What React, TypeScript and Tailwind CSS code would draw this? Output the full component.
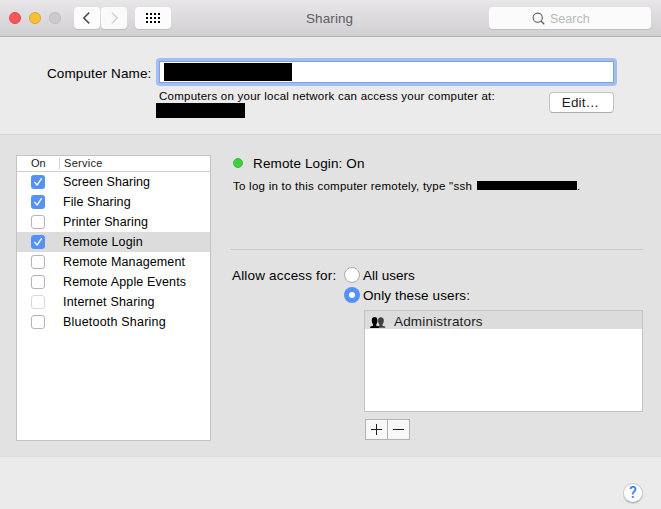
import React from "react";

type Service = { name: string; on?: boolean; selected?: boolean; disabled?: boolean; track: string };

const services: Service[] = [
  { name: "Screen Sharing", on: true, track: "tracking-[0.06px]" },
  { name: "File Sharing", on: true, track: "tracking-[0.08px]" },
  { name: "Printer Sharing", track: "tracking-[0.11px]" },
  { name: "Remote Login", on: true, selected: true, track: "tracking-[0.17px]" },
  { name: "Remote Management", track: "tracking-[0.11px]" },
  { name: "Remote Apple Events", track: "tracking-[0.16px]" },
  { name: "Internet Sharing", disabled: true, track: "tracking-[0.17px]" },
  { name: "Bluetooth Sharing", track: "tracking-[0.2px]" },
];

function Checkbox({ on, disabled }: { on?: boolean; disabled?: boolean }) {
  if (on) {
    return (
      <span className="block size-[14px] shrink-0 rounded-[3px] bg-[#5491fb]">
        <svg viewBox="0 0 14 14" className="block size-[14px]">
          <path d="M3.7 7.4 6.1 10.1 10.4 3.7" fill="none" stroke="#fff" strokeWidth="1.4" strokeLinecap="round" strokeLinejoin="round" />
        </svg>
      </span>
    );
  }
  return (
    <span
      className={
        "block size-[14px] shrink-0 rounded-[3px] border bg-white " +
        (disabled ? "border-[#d9d9d9]" : "border-[#b4b4b4]")
      }
    />
  );
}

function TitleBar() {
  return (
    <header className="flex h-[37px] border-b border-[#b3b0b3] bg-linear-to-b from-[#e8e6e8] to-[#d1cfd1] pt-[7px] pl-[9px]">
      <div className="flex gap-2 pt-[5px]">
        <span className="size-3 rounded-full border border-[#e2474f] bg-[#f9565d]" />
        <span className="size-3 rounded-full border border-[#dda32e] bg-[#f8bf35]" />
        <span className="size-3 rounded-full border border-[#bdbbbd] bg-[#cccacc]" />
      </div>
      <div className="ml-[13px] flex gap-px">
        <span className="h-[22px] w-[26px] rounded-[4px] bg-[#fcfcfc] shadow-[0_1px_0_#bfbdbf]">
          <svg viewBox="0 0 26 22" className="block h-[22px] w-[26px]">
            <path d="M15.2 5.6 9.8 11l5.4 5.4" fill="none" stroke="#4b4b4b" strokeWidth="1.5" />
          </svg>
        </span>
        <span className="h-[22px] w-[26px] rounded-[4px] bg-[#fafafa] shadow-[0_1px_0_#bfbdbf]">
          <svg viewBox="0 0 26 22" className="block h-[22px] w-[26px]">
            <path d="M10.8 5.6 16.2 11l-5.4 5.4" fill="none" stroke="#cfcfcf" strokeWidth="1.3" />
          </svg>
        </span>
      </div>
      <div className="ml-2 grid h-[22px] w-9 grid-cols-[repeat(4,2px)] content-center justify-center gap-[2px] rounded-[4px] bg-[#fcfcfc] shadow-[0_1px_0_#bfbdbf]">
        {Array.from({ length: 12 }, (_, i) => (
          <span key={i} className="size-[2px] bg-black" />
        ))}
      </div>
      <h1 className="ml-[135px] w-[60px] pt-[4px] text-[13.5px] leading-[16px] tracking-[0.1px] text-[#5f5d5f]">Sharing</h1>
      <div className="ml-[123px] flex h-[22px] w-[162px] rounded-[4px] bg-[#fbfbfb] pl-[43px] shadow-[0_1px_0_#bfbdbf]">
        <svg viewBox="0 0 14 14" className="mt-[5px] size-[14px]">
          <circle cx="5.7" cy="5.7" r="4.6" fill="none" stroke="#5c5c5c" strokeWidth="1.1" />
          <path d="m9 9 3.2 3.2" stroke="#5c5c5c" strokeWidth="1.3" />
        </svg>
        <span className="pt-[4px] pl-1 text-[12.5px] leading-[16px] text-[#b9b9b9]">Search</span>
      </div>
    </header>
  );
}

function NameSection() {
  return (
    <section className="flex h-[98px] border-b border-[#d5d5d5] bg-[#ebebeb] pt-[21px]">
      <label className="w-[156px] pt-[8px] pl-[47px] text-[13.5px] leading-[16px] tracking-[0.12px] whitespace-nowrap">Computer Name:</label>
      <div className="w-[461px]">
        <div className="h-7 rounded-[4px] bg-[#a2bff3] p-[3px]">
          <div className="h-[22px] border border-[#7f9fe0] bg-white pt-px pl-1">
            <div className="h-[18px] w-32 bg-black" />
          </div>
        </div>
        <div className="flex justify-between">
          <div>
            <p className="mt-[4px] ml-[3px] text-[11.5px] leading-[13px] tracking-[0.24px] whitespace-nowrap">
              Computers on your local network can access your computer at:
            </p>
            <div className="h-[15px] w-[89px] bg-black" />
          </div>
          <button className="mt-[6px] mr-[3px] h-[21px] w-[65px] rounded-[4px] border border-[#c3c3c3] border-b-[#acacac] bg-white pr-[2px] text-[13.5px] leading-[19px] tracking-[0.15px] text-[#1c1c1c]">
            Edit…
          </button>
        </div>
      </div>
    </section>
  );
}

function ServiceList() {
  return (
    <div className="h-[286px] w-[195px] border border-[#c3c3c3] bg-white">
      <div className="flex h-4 border-b border-[#d0d0d0] text-[11px] leading-[15px] text-[#1c1c1c]">
        <span className="w-[42px] pl-[14px]">On</span>
        <span className="mt-[2px] h-[11px] w-px bg-[#d2d2d2]" />
        <span className="pl-1 tracking-[0.3px]">Service</span>
      </div>
      {services.map((s) => (
        <div key={s.name} className={"flex h-5 items-center pl-[14px] " + (s.selected ? "bg-[#dcdcdc]" : "")}>
          <Checkbox on={s.on} disabled={s.disabled} />
          <span className={"pl-[18px] text-[12.5px] leading-[20px] whitespace-nowrap " + s.track}>{s.name}</span>
        </div>
      ))}
    </div>
  );
}

function Details() {
  return (
    <div className="ml-[19px] w-[413px]">
      <div className="flex h-4 items-center">
        <span className="ml-[3px] size-[10px] rounded-full border border-[#38bd35] bg-[#41d03d]" />
        <span className="pt-[2px] pl-[10px] text-[13.5px] leading-[16px] tracking-[0.13px]">Remote Login: On</span>
      </div>
      <div className="mt-[9px] flex h-[13px] pl-[3px] text-[11.5px] leading-[13px] tracking-[0.25px]">
        <span className="w-[244px] whitespace-nowrap">To log in to this computer remotely, type "ssh</span>
        <span className="mt-px h-[9px] w-[100px] bg-black" />
        <span>.</span>
      </div>
      <div className="mt-[56px] h-px bg-[#cbcbcb]" />
      <div className="mt-[17px] flex text-[13.5px] leading-[16px]">
        <span className="w-[114px] pt-px pl-[2px] tracking-[0.18px] whitespace-nowrap">Allow access for:</span>
        <div className="flex flex-col gap-1">
          <div className="flex h-4">
            <span className="size-4 rounded-full border border-[#acacac] bg-white" />
            <span className="pt-px pl-[3px]">All users</span>
          </div>
          <div className="flex h-4">
            <span className="flex size-4 items-center justify-center rounded-full bg-[#5491fb]">
              <span className="size-[6px] rounded-full bg-white" />
            </span>
            <span className="pt-px pl-[3px] tracking-[0.12px]">Only these users:</span>
          </div>
        </div>
      </div>
      <div className="mt-[7px] ml-[134px] h-[102px] border border-[#c3c3c3] bg-white">
        <div className="flex h-[18px] bg-[#dcdcdc] pl-[5px]">
          <svg viewBox="0 0 16 11" className="mt-[6px] h-[11px] w-4">
            <path d="M8 10.8V9.400l1.300-.6V7.200C8.300 6.300 7.900 5.200 8 3.200 8.100 1.200 9.200.2 10.900.2s2.900 1 2.900 3c0 1.900-.4 3.200-1.300 4.100v1.500l2.500.8.500 1.200Z" fill="#3f3f3f" />
            <path d="M0 11 .4 9.600l2.600-.8V7.200C2.200 6.300 1.800 5.100 1.800 3.200 1.800 1.100 2.900 0 4.600 0s2.800 1.100 2.800 3.200c0 1.900-.3 3.100-1.100 4v1.600l2.600.8.400 1.400Z" fill="#000" />
          </svg>
          <span className="pt-[3px] pl-[8px] text-[13.5px] leading-[16px] tracking-[0.18px] text-[#1c1c1c]">Administrators</span>
        </div>
      </div>
      <div className="mt-[7px] ml-[135px] flex h-[21px] w-[45px] border border-[#b3b3b3] bg-[#f8f8f8]">
        <svg viewBox="0 0 21 19" className="h-[19px] w-[21px]">
          <path d="M5 9.500h11M10.500 4v11" stroke="#1c1c1c" />
        </svg>
        <span className="w-px bg-[#b3b3b3]" />
        <svg viewBox="0 0 21 19" className="h-[19px] w-[21px]">
          <path d="M5 9.500h11" stroke="#1c1c1c" />
        </svg>
      </div>
    </div>
  );
}

export default function App() {
  return (
    <div className="h-[509px] w-[661px] overflow-hidden bg-[#ebebeb] font-['Liberation_Sans',Arial,sans-serif] text-black">
      <TitleBar />
      <NameSection />
      <main className="flex h-[322px] border-b border-[#dcdcdc] bg-[#e2e2e2] pt-5 pl-4">
        <ServiceList />
        <Details />
      </main>
      <footer className="flex justify-end pt-[26px] pr-[18px]">
        <button className="flex size-5 items-center justify-center rounded-full border border-[#cdcdcd] border-b-[#b0b0b0] bg-white font-['Roboto',sans-serif] text-[16px] leading-none font-medium text-[#3f7ef8] shadow-[0_1px_1px_#c8c8c8]">
          ?
        </button>
      </footer>
    </div>
  );
}
